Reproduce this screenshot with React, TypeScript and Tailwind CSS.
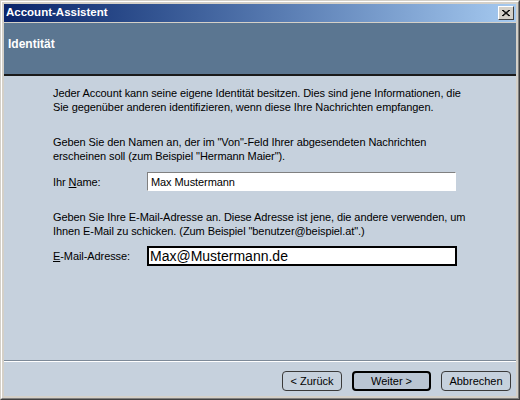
import React from "react";

export default function App() {
  const font = { fontFamily: '"Liberation Sans", Arial, sans-serif' } as React.CSSProperties;
  return (
    <div
      className="w-[520px] h-[400px] bg-[#d4d0c8] border-t border-l border-t-[#d4d0c8] border-l-[#d4d0c8] border-r border-b border-r-[#404040] border-b-[#404040] text-[11px] text-black"
      style={font}
    >
      <div className="w-full h-full border-t border-l border-t-white border-l-white border-r border-b border-r-[#808080] border-b-[#808080] p-[2px] flex flex-col">
        {/* title bar */}
        <div className="h-[18px] flex items-center justify-between pl-[2px] pr-[2px] bg-gradient-to-r from-[#0a246a] to-[#a6caf0]">
          <span className="text-white font-bold text-[11.5px]">Account-Assistent</span>
          <div className="w-[16px] h-[14px] bg-[#d4d0c8] border-t border-l border-t-white border-l-white border-r border-b border-r-[#404040] border-b-[#404040] flex items-center justify-center">
            <svg width="8" height="7" viewBox="0 0 8 7">
              <path d="M0 0 L7 6 M1 0 L8 6 M7 0 L0 6 M8 0 L1 6" stroke="black" strokeWidth="1" />
            </svg>
          </div>
        </div>
        <div className="h-[1px] bg-[#d4d0c8]" />
        {/* header */}
        <div className="h-[53px] bg-[#5b7691] pl-[4px] pt-[12px] border-b-2 border-b-[#1a1a1a]">
          <span className="text-white font-bold text-[12px]">Identität</span>
        </div>
        {/* body */}
        <div className="flex-1 bg-[#c6d1dd] flex flex-col">
          <div className="flex-1 pl-[49px] pr-[30px] pt-[10px] leading-[14px] tracking-[-0.08px]">
            <p className="m-0">
              Jeder Account kann seine eigene Identität besitzen. Dies sind jene Informationen, die
              <br />
              Sie gegenüber anderen identifizieren, wenn diese Ihre Nachrichten empfangen.
            </p>
            <p className="mt-[21px]">
              Geben Sie den Namen an, der im "Von"-Feld Ihrer abgesendeten Nachrichten
              <br />
              erscheinen soll (zum Beispiel "Hermann Maier").
            </p>
            <div className="mt-[9px] flex items-center">
              <span className="w-[94px]">
                Ihr <span className="underline">N</span>ame:
              </span>
              <div className="w-[309px] h-[19px] bg-white border-t border-l border-t-[#808080] border-l-[#808080] border-r border-b border-r-white border-b-white flex items-center pl-[3px]">
                Max Mustermann
              </div>
            </div>
            <p className="mt-[19px]">
              Geben Sie Ihre E-Mail-Adresse an. Diese Adresse ist jene, die andere verwenden, um
              <br />
              Ihnen E-Mail zu schicken. (Zum Beispiel "benutzer@beispiel.at".)
            </p>
            <div className="mt-[8px] flex items-center">
              <span className="w-[94px]">
                <span className="underline">E</span>-Mail-Adresse:
              </span>
              <div className="w-[310px] h-[20px] bg-white border-2 border-black flex items-center pl-[1px] text-[14px] tracking-normal">
                Max@Mustermann.de
              </div>
            </div>
          </div>
          <div className="h-[1px] bg-[#7d8a98]" />
          <div className="h-[1px] bg-white" />
          <div className="h-[34px] flex items-start justify-end pr-[5px] pt-[9px] gap-[10px]">
            <button className="w-[60px] h-[20px] rounded-[4px] border border-[#3a3a3a] bg-[#c6d1dd] text-[11px] text-black" style={font}>
              &lt; Zurück
            </button>
            <button className="w-[79px] h-[20px] rounded-[4px] border-2 border-black bg-[#b9c5d3] text-[11px] text-black" style={font}>
              Weiter &gt;
            </button>
            <button className="w-[70px] h-[20px] rounded-[4px] border border-[#3a3a3a] bg-[#c6d1dd] text-[11px] text-black" style={font}>
              Abbrechen
            </button>
          </div>
        </div>
      </div>
    </div>
  );
}
